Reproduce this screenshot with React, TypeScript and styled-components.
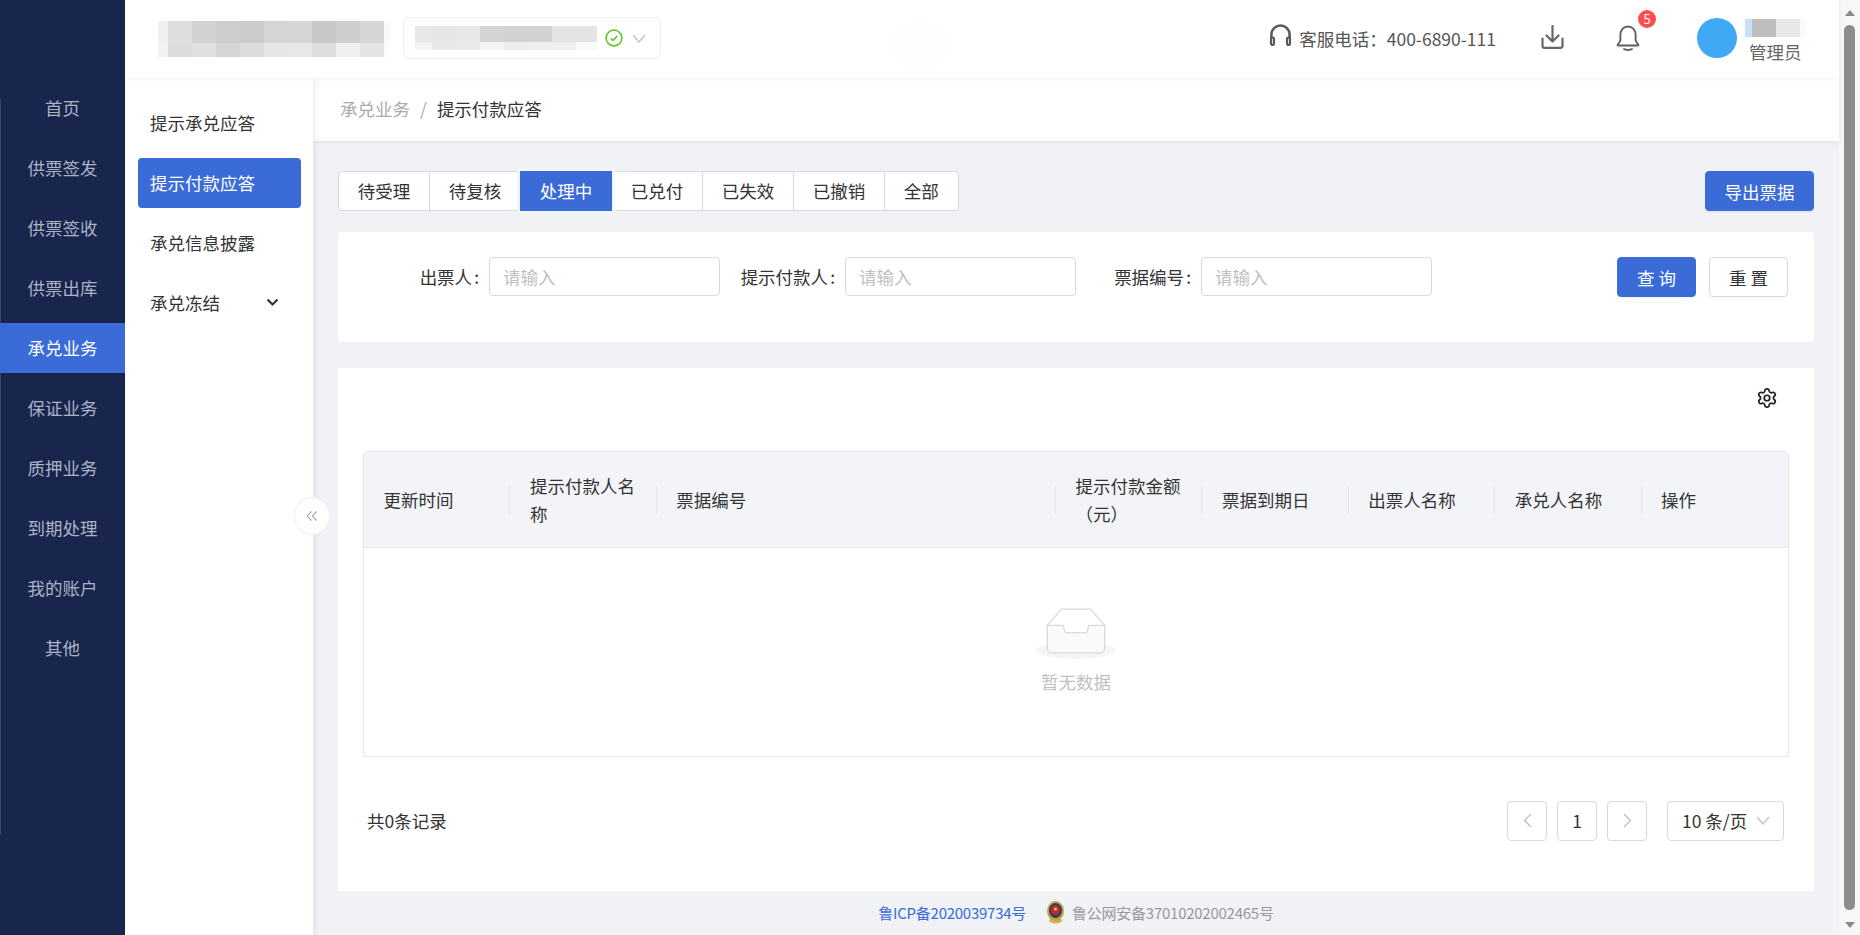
import React from 'react'
import styled, { createGlobalStyle } from 'styled-components'
import { Settings } from 'lucide-react'

const primary = '#3a6bd7'

const GlobalStyle = createGlobalStyle`
    html, body {
        margin: 0;
        padding: 0;
        height: 100%;
        overflow: hidden;
    }
    body {
        font-family: "Noto Sans CJK SC", "Liberation Sans", sans-serif;
        font-size: 17.5px;
        color: #333;
        background: #f0f2f6;
    }
    * {
        box-sizing: border-box;
    }
`

const mainMenu = ['首页', '供票签发', '供票签收', '供票出库', '承兑业务', '保证业务', '质押业务', '到期处理', '我的账户', '其他']
const tabs = ['待受理', '待复核', '处理中', '已兑付', '已失效', '已撤销', '全部']

type Cell = [number, string]

const logoTop: Cell[] = [[10, '#f0f0f0'], [24, '#dedede'], [24, '#d2d2d2'], [24, '#cdcdcd'], [24, '#cbcbcb'], [24, '#d5d5d5'], [24, '#d6d6d6'], [24, '#c8c8c8'], [24, '#cecece'], [24, '#d6d6d6'], [6, '#fafafa']]
const logoBottom: Cell[] = [[10, '#f2f2f2'], [24, '#dcdcdc'], [24, '#e0e0e0'], [24, '#d5d5d5'], [24, '#dcdcdc'], [24, '#e6e6e6'], [24, '#e8e8e8'], [24, '#dddddd'], [24, '#f0f0f0'], [24, '#e4e4e4'], [6, '#fcfcfc']]
const orgTop: Cell[] = [[17, '#e8e8e8'], [24, '#e6e6e6'], [24, '#e8e8e8'], [24, '#d4d4d4'], [24, '#d2d2d2'], [24, '#d2d2d2'], [24, '#e4e4e4'], [21, '#e4e4e4']]
const orgBottom: Cell[] = [[17, '#f3f3f3'], [24, '#e9e9e9'], [24, '#e9e9e9'], [24, '#f3f3f3'], [24, '#ebebeb'], [24, '#efefef'], [24, '#efefef'], [21, '#f8f8f8']]
const nameRow: Cell[] = [[7, '#c5e2f8'], [24, '#bdbdbd'], [24, '#e6e8e8'], [6, '#fbfbfb']]

const Mosaic = ({ rows }: { rows: { height: number; cells: Cell[] }[] }) => (
    <div>
        {rows.map((row, i) => (
            <MosaicRow key={i} $height={row.height}>
                {row.cells.map((c, j) => <MosaicCell key={j} $width={c[0]} $color={c[1]} />)}
            </MosaicRow>
        ))}
    </div>
)

const Caret = () => (
    <svg width="14" height="9" viewBox="0 0 14 9" fill="none">
        <path d="M1 1l6 7 6-7" stroke="#c4c4c4" strokeWidth="1.4" />
    </svg>
)

export default function App() {
    return (
        <Page>
            <GlobalStyle />
            <Sidebar>
                <Rail />
                {mainMenu.map((m) => <MenuItem key={m} $active={m === '承兑业务'}>{m}</MenuItem>)}
            </Sidebar>
            <Main>
                <Header>
                    <Watermark />
                    <Mosaic rows={[{ height: 22, cells: logoTop }, { height: 14, cells: logoBottom }]} />
                    <OrgSelect>
                        <Mosaic rows={[{ height: 16, cells: orgTop }, { height: 8, cells: orgBottom }]} />
                        <svg width="18" height="18" viewBox="0 0 18 18" fill="none">
                            <circle cx="9" cy="9" r="7.9" stroke="#52c41a" strokeWidth="1.5" />
                            <path d="M5.8 9.2l2.2 2.3 4.2-4.6" stroke="#52c41a" strokeWidth="1.5" />
                        </svg>
                        <Caret />
                    </OrgSelect>
                    <HeaderRight>
                        <Phone>
                            <svg width="23" height="22" viewBox="0 0 23 22" fill="none">
                                <path d="M2.400 14v-3.400a9.100 9.100 0 0 1 18.200 0V14" stroke="#5a5a5a" strokeWidth="2.600" />
                                <rect x="2" y="13.500" width="3" height="7.500" rx="1.500" stroke="#5a5a5a" strokeWidth="2.200" />
                                <rect x="18" y="13.500" width="3" height="7.500" rx="1.500" stroke="#5a5a5a" strokeWidth="2.200" />
                            </svg>
                            <PhoneText>客服电话：400-6890-111</PhoneText>
                        </Phone>
                        <DownloadIcon width="23" height="24" viewBox="0 0 23 24" fill="none">
                            <path d="M11.500 1v15M5.500 10.500l6 6 6-6" stroke="#666" strokeWidth="2.200" strokeLinecap="round" strokeLinejoin="round" />
                            <path d="M1.500 13.500v7.500a1.800 1.800 0 0 0 1.800 1.800h16.400a1.800 1.800 0 0 0 1.800-1.800v-7.500" stroke="#666" strokeWidth="2.200" strokeLinecap="round" />
                        </DownloadIcon>
                        <BellBox>
                            <svg width="24" height="26" viewBox="0 0 24 26" fill="none">
                                <path d="M12 1.500c-4.600 0-7.600 3.400-7.600 8v5.500c0 1.800-1.100 3-2.600 4.400-.5.5-.2 1.100.5 1.100h19.400c.7 0 1-.6.5-1.100-1.500-1.400-2.600-2.600-2.600-4.400V9.500c0-4.600-3-8-7.600-8z" stroke="#5f5f5f" strokeWidth="1.900" />
                                <path d="M8 24c1.800 1.300 6.200 1.300 8 0" stroke="#5f5f5f" strokeWidth="1.900" strokeLinecap="round" />
                            </svg>
                            <Badge>5</Badge>
                        </BellBox>
                        <User>
                            <Avatar />
                            <UserInfo>
                                <Mosaic rows={[{ height: 18, cells: nameRow }]} />
                                <Role>管理员</Role>
                            </UserInfo>
                        </User>
                    </HeaderRight>
                </Header>
                <Body>
                    <SubNav>
                        <SubItem>提示承兑应答</SubItem>
                        <SubItem $active>提示付款应答</SubItem>
                        <SubItem>承兑信息披露</SubItem>
                        <SubItem>
                            承兑冻结
                            <svg width="13" height="9" viewBox="0 0 13 9" fill="none">
                                <path d="M1.500 1.500l5 5 5-5" stroke="#333" strokeWidth="2.200" />
                            </svg>
                        </SubItem>
                        <Collapse>
                            <svg width="12" height="12" viewBox="0 0 14 13" fill="none">
                                <path d="M6.500 1L1.500 6.500l5 5.500M12.500 1l-5 5.500 5 5.500" stroke="#9a9a9a" strokeWidth="1.200" />
                            </svg>
                        </Collapse>
                    </SubNav>
                    <Content>
                        <Breadcrumb>
                            <Crumb>承兑业务</Crumb>
                            <CrumbSep>/</CrumbSep>
                            <CrumbCurrent>提示付款应答</CrumbCurrent>
                        </Breadcrumb>
                        <Panel>
                            <TabRow>
                                <TabGroup>
                                    {tabs.map((t) => <Tab key={t} $active={t === '处理中'}>{t}</Tab>)}
                                </TabGroup>
                                <PrimaryButton $width={109}>导出票据</PrimaryButton>
                            </TabRow>
                            <FilterCard>
                                <Field>
                                    <FieldLabel>出票人</FieldLabel>
                                    <FieldInput placeholder="请输入" />
                                </Field>
                                <Field>
                                    <FieldLabel>提示付款人</FieldLabel>
                                    <FieldInput placeholder="请输入" />
                                </Field>
                                <Field>
                                    <FieldLabel>票据编号</FieldLabel>
                                    <FieldInput placeholder="请输入" />
                                </Field>
                                <FilterActions>
                                    <PrimaryButton $width={79}>查 询</PrimaryButton>
                                    <GhostButton>重 置</GhostButton>
                                </FilterActions>
                            </FilterCard>
                            <TableCard>
                                <TableTools>
                                    <Settings size={22} strokeWidth={1.9} color="#222" />
                                </TableTools>
                                <Table>
                                    <TableHead>
                                        <HeadCell>更新时间</HeadCell>
                                        <HeadCell>提示付款人名称</HeadCell>
                                        <HeadCell>票据编号</HeadCell>
                                        <HeadCell>提示付款金额（元）</HeadCell>
                                        <HeadCell>票据到期日</HeadCell>
                                        <HeadCell>出票人名称</HeadCell>
                                        <HeadCell>承兑人名称</HeadCell>
                                        <HeadCell>操作</HeadCell>
                                    </TableHead>
                                    <EmptyBody>
                                        <svg width="80" height="51" viewBox="0 0 64 41">
                                            <g transform="translate(0 1)" fill="none" fillRule="evenodd">
                                                <ellipse fill="#f5f5f5" cx="32" cy="33" rx="32" ry="7" />
                                                <g fillRule="nonzero" stroke="#d9d9d9">
                                                    <path d="M55 12.760L44.854 1.258C44.367.474 43.656 0 42.907 0H21.093c-.749 0-1.460.474-1.947 1.257L9 12.761V22h46v-9.240z" />
                                                    <path d="M41.613 15.931c0-1.605.994-2.930 2.227-2.931H55v18.137C55 33.260 53.680 35 52.050 35h-40.100C10.320 35 9 33.259 9 31.137V13h11.160c1.233 0 2.227 1.323 2.227 2.928v.022c0 1.605 1.005 2.901 2.237 2.901h14.752c1.232 0 2.237-1.308 2.237-2.913v-.007z" fill="#fafafa" />
                                                </g>
                                            </g>
                                        </svg>
                                        <EmptyText>暂无数据</EmptyText>
                                    </EmptyBody>
                                </Table>
                                <Pager>
                                    <PagerTotal>共0条记录</PagerTotal>
                                    <PagerRight>
                                        <PageButton>
                                            <svg width="9" height="15" viewBox="0 0 9 15" fill="none"><path d="M8 1L1.500 7.500 8 14" stroke="#bfbfbf" strokeWidth="1.300" /></svg>
                                        </PageButton>
                                        <PageButton>1</PageButton>
                                        <PageButton>
                                            <svg width="9" height="15" viewBox="0 0 9 15" fill="none"><path d="M1 1l6.500 6.500L1 14" stroke="#bfbfbf" strokeWidth="1.300" /></svg>
                                        </PageButton>
                                        <PageSize>
                                            10 条/页
                                            <Caret />
                                        </PageSize>
                                    </PagerRight>
                                </Pager>
                            </TableCard>
                        </Panel>
                        <Footer>
                            <IcpLink>鲁ICP备2020039734号</IcpLink>
                            <Police>
                                <svg width="19" height="23" viewBox="0 0 19 23">
                                    <ellipse cx="9.500" cy="19.500" rx="6.500" ry="3" fill="#d8b24a" />
                                    <ellipse cx="9.500" cy="10" rx="8.500" ry="10" fill="#c9a13a" />
                                    <ellipse cx="9.500" cy="9.500" rx="6.500" ry="7.500" fill="#24407a" />
                                    <ellipse cx="9.500" cy="9" rx="4.500" ry="5" fill="#c8281e" />
                                    <circle cx="9.500" cy="8" r="1.500" fill="#e8c860" />
                                </svg>
                                鲁公网安备37010202002465号
                            </Police>
                        </Footer>
                    </Content>
                </Body>
            </Main>
            <Scrollbar>
                <ScrollArrow $up />
                <ScrollThumb />
                <ScrollArrow />
            </Scrollbar>
        </Page>
    )
}

const Page = styled.div`
    display: flex;
    width: 100vw;
    height: 100vh;
    overflow: hidden;
`
const Sidebar = styled.div`
    position: relative;
    flex: 0 0 125px;
    padding-top: 83px;
    background: #18264d;
`
const Rail = styled.div`
    position: absolute;
    left: 0;
    top: 99px;
    width: 1px;
    height: 736px;
    background: #3a4565;
`
const MenuItem = styled.div<{ $active?: boolean }>`
    position: relative;
    height: 50px;
    margin-bottom: 10px;
    line-height: 50px;
    text-align: center;
    color: ${(p) => (p.$active ? '#fff' : '#aab2c6')};
    background: ${(p) => (p.$active ? primary : 'transparent')};
`
const Main = styled.div`
    flex: 1;
    min-width: 0;
    display: flex;
    flex-direction: column;
`
const Header = styled.div`
    position: relative;
    z-index: 3;
    flex: 0 0 78px;
    display: flex;
    align-items: center;
    padding: 0 33px;
    background: #fff;
    box-shadow: 0 1px 5px rgba(0, 0, 0, 0.06);
`
const Watermark = styled.div`
    position: absolute;
    left: 763px;
    top: 20px;
    width: 64px;
    height: 50px;
    border-radius: 50%;
    background: #fefefe;
`
const MosaicRow = styled.div<{ $height: number }>`
    display: flex;
    height: ${(p) => p.$height}px;
`
const MosaicCell = styled.div<{ $width: number; $color: string }>`
    width: ${(p) => p.$width}px;
    background: ${(p) => p.$color};
`
const OrgSelect = styled.div`
    display: flex;
    align-items: center;
    width: 258px;
    height: 42px;
    margin: -2px 0 0 13px;
    padding-left: 11px;
    gap: 8px;
    border: 1px solid #eeeeee;
    border-radius: 5px;
    svg:last-child {
        margin-left: 1px;
    }
`
const HeaderRight = styled.div`
    position: relative;
    display: flex;
    align-items: center;
    margin-left: auto;
`
const Phone = styled.div`
    display: flex;
    align-items: center;
    margin: -2px 45px 0 0;
    color: #555;
    svg {
        margin-top: -6px;
    }
`
const PhoneText = styled.span`
    margin-left: 7px;
`
const DownloadIcon = styled.svg`
    margin-top: -5px;
`
const BellBox = styled.div`
    position: relative;
    display: flex;
    margin: -2px 57px 0 52px;
`
const Badge = styled.span`
    position: absolute;
    top: -15px;
    right: -16px;
    width: 18px;
    height: 18px;
    border-radius: 50%;
    background: #ff4d4f;
    color: #fff;
    font-size: 13px;
    line-height: 18px;
    text-align: center;
`
const User = styled.div`
    display: flex;
    align-items: center;
    gap: 8px;
`
const Avatar = styled.div`
    width: 40px;
    height: 40px;
    margin-top: -2px;
    border-radius: 50%;
    background: #3fa9f5;
`
const UserInfo = styled.div`
    display: flex;
    flex-direction: column;
    margin-top: 8px;
`
const Role = styled.div`
    margin-left: 4px;
    line-height: 30px;
    color: #666;
`
const Body = styled.div`
    flex: 1;
    min-height: 0;
    display: flex;
`
const SubNav = styled.div`
    position: relative;
    z-index: 2;
    flex: 0 0 188px;
    padding: 20px 12px 0 13px;
    background: #fff;
    box-shadow: 2px 0 6px rgba(0, 0, 0, 0.08);
`
const SubItem = styled.div<{ $active?: boolean }>`
    display: flex;
    align-items: center;
    justify-content: space-between;
    height: 50px;
    margin-bottom: 10px;
    padding: 0 22px 2px 12px;
    border-radius: 4px;
    color: ${(p) => (p.$active ? '#fff' : '#333')};
    background: ${(p) => (p.$active ? primary : 'transparent')};
`
const Collapse = styled.div`
    position: absolute;
    top: 419px;
    right: -17px;
    display: flex;
    align-items: center;
    justify-content: center;
    width: 36px;
    height: 38px;
    border: 1px solid #eeeeee;
    border-radius: 50%;
    background: #fff;
`
const Content = styled.div`
    flex: 1;
    min-width: 0;
    display: flex;
    flex-direction: column;
`
const Breadcrumb = styled.div`
    position: relative;
    z-index: 1;
    flex: 0 0 63px;
    display: flex;
    align-items: center;
    padding: 0 27px 3px;
    background: #fff;
    box-shadow: 0 1px 5px rgba(0, 0, 0, 0.07);
`
const Crumb = styled.span`
    color: #aaa;
`
const CrumbSep = styled.span`
    margin: 0 10px;
    color: #aaa;
`
const CrumbCurrent = styled.span`
    color: #333;
`
const Panel = styled.div`
    flex: 1;
    min-height: 0;
    display: flex;
    flex-direction: column;
    padding: 30px 25px 0;
`
const TabRow = styled.div`
    display: flex;
    justify-content: space-between;
    margin-bottom: 21px;
`
const TabGroup = styled.div`
    display: flex;
`
const Tab = styled.div<{ $active?: boolean }>`
    position: relative;
    height: 40px;
    padding: 0 18.75px;
    margin-left: -1px;
    line-height: 38px;
    border: 1px solid ${(p) => (p.$active ? primary : '#d9d9d9')};
    color: ${(p) => (p.$active ? '#fff' : '#333')};
    background: ${(p) => (p.$active ? primary : '#fff')};
    box-shadow: ${(p) => (p.$active ? '0 0 0 3px #f0f5ff' : 'none')};
    z-index: ${(p) => (p.$active ? 1 : 0)};
    &:first-child {
        margin-left: 0;
        border-radius: 4px 0 0 4px;
    }
    &:last-child {
        border-radius: 0 4px 4px 0;
    }
`
const PrimaryButton = styled.button<{ $width: number }>`
    width: ${(p) => p.$width}px;
    height: 40px;
    padding: 0;
    border: 1px solid ${primary};
    border-radius: 4px;
    background: ${primary};
    color: #fff;
    font: inherit;
    box-shadow: 0 2px 0 rgba(0, 0, 0, 0.03);
`
const GhostButton = styled.button`
    width: 79px;
    height: 40px;
    padding: 0;
    border: 1px solid #d9d9d9;
    border-radius: 4px;
    background: #fff;
    color: #333;
    font: inherit;
    box-shadow: 0 2px 0 rgba(0, 0, 0, 0.02);
`
const FilterCard = styled.div`
    flex: 0 0 110px;
    display: flex;
    align-items: flex-start;
    padding: 25px 26px 0 26.5px;
    margin-bottom: 26px;
    border-radius: 4px;
    background: #fff;
`
const Field = styled.div`
    display: flex;
    align-items: center;
    width: 356px;
`
const FieldLabel = styled.label`
    flex: 0 0 124.5px;
    padding-right: 10px;
    text-align: right;
    color: #333;
    &::after {
        content: ':';
        margin-left: 2px;
    }
`
const FieldInput = styled.input`
    width: 231px;
    height: 39px;
    padding: 0 13px;
    border: 1px solid #d9d9d9;
    border-radius: 4px;
    font: inherit;
    outline: none;
    &::placeholder {
        color: #bfbfbf;
    }
`
const FilterActions = styled.div`
    display: flex;
    gap: 13px;
    margin-left: auto;
`
const TableCard = styled.div`
    flex: 1;
    min-height: 0;
    padding: 19px 25px 0;
    background: #fff;
`
const TableTools = styled.div`
    display: flex;
    justify-content: flex-end;
    height: 22px;
    padding-right: 11px;
    margin-bottom: 42px;
`
const Table = styled.div`
    height: 306px;
    border: 1px solid #e8e8e8;
    border-radius: 4px 4px 0 0;
`
const TableHead = styled.div`
    display: grid;
    grid-template-columns: 146.4px 146.4px 1fr repeat(5, 146.4px);
    height: 96px;
    align-items: center;
    background: #f3f4f8;
    border-bottom: 1px solid #e8e8e8;
`
const HeadCell = styled.div`
    position: relative;
    padding: 0 19.5px;
    line-height: 28px;
    color: #333;
    &:not(:last-child)::after {
        content: '';
        position: absolute;
        right: 0;
        top: 50%;
        width: 1px;
        height: 28px;
        margin-top: -14px;
        background: #e3e5ea;
    }
`
const EmptyBody = styled.div`
    display: flex;
    flex-direction: column;
    align-items: center;
    padding-top: 60px;
`
const EmptyText = styled.div`
    margin-top: 10px;
    color: #bfbfbf;
`
const Pager = styled.div`
    display: flex;
    align-items: center;
    justify-content: space-between;
    margin-top: 44px;
    padding: 0 5px 0 4px;
`
const PagerTotal = styled.span`
    margin-top: -2px;
`
const PagerRight = styled.div`
    display: flex;
    align-items: center;
    gap: 10px;
`
const PageButton = styled.div`
    display: flex;
    align-items: center;
    justify-content: center;
    width: 40px;
    height: 40px;
    padding-bottom: 1px;
    border: 1px solid #d9d9d9;
    border-radius: 4px;
    background: #fff;
`
const PageSize = styled.div`
    display: flex;
    align-items: center;
    justify-content: space-between;
    width: 117px;
    height: 40px;
    margin-left: 10px;
    padding: 0 13px 1px 14px;
    border: 1px solid #d9d9d9;
    border-radius: 4px;
`
const Footer = styled.div`
    flex: 0 0 44px;
    display: flex;
    align-items: center;
    justify-content: center;
    gap: 20px;
    padding-bottom: 2px;
    font-size: 15px;
    letter-spacing: -0.25px;
`
const IcpLink = styled.a`
    color: ${primary};
`
const Police = styled.span`
    display: flex;
    align-items: center;
    gap: 7px;
    color: #999;
`
const Scrollbar = styled.div`
    flex: 0 0 21px;
    display: flex;
    flex-direction: column;
    align-items: center;
    background: #f7f7f7;
`
const ScrollArrow = styled.div<{ $up?: boolean }>`
    flex: 0 0 25px;
    width: 0;
    height: 0;
    &::before {
        content: '';
        display: block;
        margin: ${(p) => (p.$up ? '10px' : '12px')} 0 0 -5px;
        width: 0;
        height: 0;
        border-left: 5px solid transparent;
        border-right: 5px solid transparent;
        ${(p) => (p.$up ? 'border-bottom: 6px solid #8a8a8a;' : 'border-top: 6px solid #8a8a8a;')}
    }
`
const ScrollThumb = styled.div`
    flex: 1;
    width: 11px;
    border-radius: 6px;
    background: #8c8c8c;
`
